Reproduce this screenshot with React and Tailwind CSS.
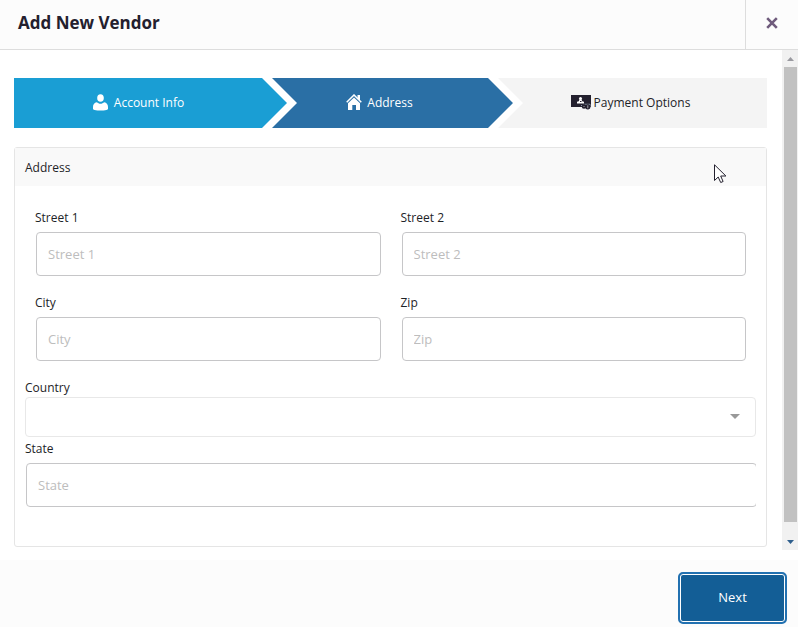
import { useState } from 'react'

const steps = [
  {
    label: 'Account Info',
    icon: UserIcon,
    className: 'grow-[273] bg-[#1a9ed4] text-white [clip-path:polygon(0_0,calc(100%-25px)_0,100%_50%,calc(100%-25px)_100%,0_100%)]',
    inner: 'gap-1.5 pr-6',
  },
  {
    label: 'Address',
    icon: HomeIcon,
    className: 'grow-[241] -ml-[15px] bg-[#2a6fa5] text-white [clip-path:polygon(0_0,calc(100%-25px)_0,100%_50%,calc(100%-25px)_100%,0_100%,25px_50%)]',
    inner: 'gap-[5px] pr-6.5',
  },
  {
    label: 'Payment Options',
    icon: PaymentIcon,
    className: 'grow-[269] -ml-[15px] bg-[#f4f4f4] text-[#1d2327] [clip-path:polygon(0_0,100%_0,100%_100%,0_100%,25px_50%)]',
    inner: 'gap-[3px] pr-1',
  },
]

function UserIcon() {
  return (
    <svg width="15" height="17" viewBox="0 0 15 17" fill="currentColor" aria-hidden="true">
      <ellipse cx="7.5" cy="4" rx="3.3" ry="3.800" />
      <path d="M3.800 8.200c1 .9 2.300 1.500 3.700 1.500s2.700-.6 3.700-1.500C13.800 8.700 15 10.500 15 13v1.500c0 1-.8 1.400-1.500 1.500-1.900.4-3.900.6-6 .6s-4.100-.2-6-.6C.8 15.900 0 15.500 0 14.500V13c0-2.500 1.200-4.300 3.800-4.800z" />
    </svg>
  )
}

function HomeIcon() {
  return (
    <svg width="16" height="17" viewBox="0 0 16 17" aria-hidden="true">
      <path d="M11.500 1H14v5.500l-2.500-2z" fill="#fff" />
      <path d="M.7 8.200L8 1l7.300 7.200" fill="none" stroke="#fff" strokeWidth="1.500" />
      <path d="M8 3.500l6 5.700v6.800H2V9.200z" fill="#fff" />
      <path d="M6.300 11H10v5H6.300z" fill="#2a6fa5" />
    </svg>
  )
}

function PaymentIcon() {
  return (
    <svg width="20" height="16" viewBox="0 0 20 16" aria-hidden="true">
      <path d="M0 1h20v12H0z" fill="#23202e" />
      <circle cx="9.500" cy="4.500" r="1.500" fill="#fff" />
      <path d="M8.500 5.500h2l.7 1.700 1.800.6v1.700H6V7.800l1.800-.6z" fill="#fff" />
      <path d="M9 7.500h1.500" stroke="#23202e" />
      <path d="M10 11.500h2l1.500-1.200H19V13" fill="none" stroke="#8d9bab" />
      <circle cx="13" cy="12.500" r="2.300" fill="#23202e" />
      <circle cx="16.800" cy="12.800" r="2.600" fill="#23202e" />
      <path d="M16.800 11.300v3M12.500 12.500h1" stroke="#a9a7b0" />
    </svg>
  )
}

function Field({ id, label, clipped }) {
  const [value, setValue] = useState('')
  return (
    <div className={clipped ? 'mt-0.5 overflow-hidden' : 'px-2.5'}>
      <label htmlFor={id} className="mb-1 block leading-5">{label}</label>
      <div className="flex">
        <input
          id={id}
          type="text"
          placeholder={label}
          value={value}
          onChange={(e) => setValue(e.target.value)}
          className={`ml-px h-11 rounded border border-[#c6c6c8] bg-white px-[11px] text-[13px] outline-none placeholder:text-[#bdbdbd] focus:border-[#2271b1] ${clipped ? 'w-full shrink-0' : 'min-w-0 flex-1'}`}
        />
      </div>
    </div>
  )
}

function Scrollbar() {
  return (
    <div className="flex w-4 shrink-0 flex-col bg-[#f1f1f1]" aria-hidden="true">
      <div className="flex h-[17px] items-center justify-center">
        <svg width="7" height="4" viewBox="0 0 7 4"><path d="M0 4L3.500 0 7 4z" fill="#9a9aa0" /></svg>
      </div>
      <div className="mr-px ml-0.5 flex-1 bg-[#c1c1c1]" />
      <div className="mt-[11px] flex h-[17px] items-center justify-center">
        <svg width="7" height="4" viewBox="0 0 7 4"><path d="M0 0h7L3.500 4z" fill="#2f5f8d" /></svg>
      </div>
    </div>
  )
}

export default function App() {
  return (
    <div className="relative flex min-h-screen flex-col bg-white font-['Open_Sans','Noto_Sans',sans-serif] text-xs text-[#1d2327]">
      <header className="flex h-[50px] border-b border-[#dddddd] bg-[#fcfcfc]">
        <h1 className="flex-1 pt-[9px] pl-[18px] text-[17px] leading-7 font-bold text-[#23202e]">Add New Vendor</h1>
        <button type="button" aria-label="Close" className="flex w-[53px] items-center justify-center border-l border-[#dddddd] pb-1">
          <svg width="12" height="12" viewBox="0 0 12 12" fill="none" stroke="#6f5b7c" strokeWidth="2.600">
            <path d="M1.200 1.200l9.600 9.600M10.800 1.200l-9.600 9.600" />
          </svg>
        </button>
      </header>

      <div className="mb-2.5 flex">
        <main className="min-w-0 flex-1 pt-7 pr-[15px] pb-[3px] pl-3.5">
          <ol className="flex h-[50px]">
            {steps.map(({ label, icon: Icon, className, inner }) => (
              <li key={label} className={`basis-0 whitespace-nowrap ${className}`}>
                <div className={`flex h-full items-center justify-center pb-0.5 ${inner}`}>
                  <Icon />
                  <span className="pt-0.5">{label}</span>
                </div>
              </li>
            ))}
          </ol>

          <section className="mt-[19px] rounded-[3px] border border-[#e5e5e5]">
            <h2 className="bg-[#f9f9f9] px-2.5 pt-2.5 pb-2 leading-5">Address</h2>
            <form className="px-2.5 pt-[22px] pb-[39px]">
              <div className="grid grid-cols-2 gap-y-[17px] pb-[17px]">
                <Field id="street-1" label="Street 1" />
                <Field id="street-2" label="Street 2" />
                <Field id="city" label="City" />
                <Field id="zip" label="Zip" />
              </div>
              <label htmlFor="country" className="-mb-px block leading-5">Country</label>
              <div className="relative">
                <select id="country" className="block h-10 w-full appearance-none rounded border border-[#e8e8e8] bg-white px-3">
                  <option value=""></option>
                </select>
                <svg width="10" height="5" viewBox="0 0 10 5" className="pointer-events-none absolute top-[17px] right-4">
                  <path d="M0 0h10L5 5z" fill="#999999" />
                </svg>
              </div>
              <Field id="state" label="State" clipped />
            </form>
          </section>
        </main>
        <Scrollbar />
      </div>

      <footer className="flex flex-1 items-start justify-end bg-[#fcfcfc] pt-3 pr-[11px]">
        <button type="button" className="h-[52px] w-[109px] rounded-[5px] border-2 border-[#2271b1] bg-[#135e96] text-[13px] text-white shadow-[inset_0_0_0_1px_#ffffff]">
          Next
        </button>
      </footer>

      {/* mouse pointer */}
      <svg width="13" height="20" viewBox="0 0 13 20" className="pointer-events-none absolute top-[164px] left-[714px]">
        <path d="M.5.8v15.700l3.700-3.500 2.500 5.500 2.400-1-2.400-5.500h5.200z" fill="#fff" stroke="#23202e" />
      </svg>
    </div>
  )
}
